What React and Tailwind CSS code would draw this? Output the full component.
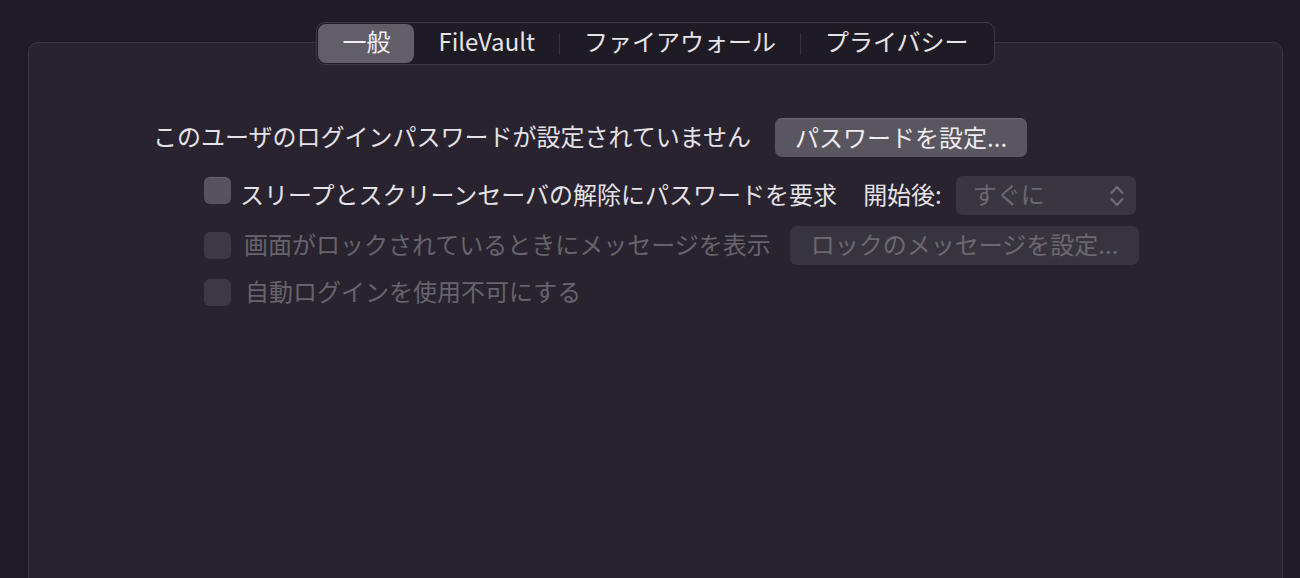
import React from "react"

const font = { fontFamily: '"Noto Sans CJK JP", "Noto Sans", sans-serif' }

const tabs = ["一般", "FileVault", "ファイアウォール", "プライバシー"]

function Checkbox({ disabled }) {
  return (
    <div
      className={
        "w-[27px] h-[27px] rounded-[6px] shrink-0 " +
        (disabled ? "bg-[#3d3943]" : "bg-[#57535d] border-t border-[#66626b]")
      }
    />
  )
}

function Chevrons() {
  return (
    <svg width="16" height="26" viewBox="0 0 16 26" fill="none">
      <path d="M2.5 10 L8 4 L13.5 10" stroke="#6f6b74" strokeWidth="2.2" strokeLinecap="round" strokeLinejoin="round" />
      <path d="M2.5 16 L8 22 L13.5 16" stroke="#6f6b74" strokeWidth="2.2" strokeLinecap="round" strokeLinejoin="round" />
    </svg>
  )
}

export default function App() {
  return (
    <div className="w-[1300px] h-[578px] overflow-hidden bg-[#201c26] pt-[42px] pl-[28px] pr-[17px] text-[#e4e2e7]" style={font}>
      <div className="relative h-[600px] rounded-[10px] border border-[#3b3741] bg-[#28232e]">
        {/* segmented tabs */}
        <div className="absolute left-0 right-0 -top-[21px] flex justify-center">
          <div className="flex items-center h-[43px] px-[1px] rounded-[9px] border border-[#3d3944] bg-[#1f1b24]">
            {tabs.map((t, i) => (
              <React.Fragment key={t}>
                {i > 1 && <div className="w-px h-[22px] bg-[#36323c]" />}
                <div
                  className={
                    "h-[39px] flex items-center pb-[5px] px-[24px] text-[24px] leading-none rounded-[8px] " +
                    (i === 0 ? "bg-[#625e67] text-[#f0eef2]" : "text-[#e6e4e9]")
                  }
                >
                  {t}
                </div>
              </React.Fragment>
            ))}
          </div>
        </div>

        <div className="pt-[75px] pl-[124px]">
          <div className="flex items-center h-[39px] gap-[24px]">
            <span className="text-[24px] leading-none pb-[4px]">このユーザのログインパスワードが設定されていません</span>
            <div className="h-[39px] px-[20px] pb-[3px] flex items-center rounded-[7px] bg-[#5a5660] text-[24px] leading-none text-[#eeecf0] border-t border-[#6a666f]">
              パスワードを設定...
            </div>
          </div>

          <div className="flex items-center h-[39px] mt-[19px] pl-[51px]">
            <div className="-mt-[10px]"><Checkbox /></div>
            <span className="ml-[9px] text-[24px] leading-none pb-[4px]">スリープとスクリーンセーバの解除にパスワードを要求</span>
            <span className="ml-[26px] text-[24px] leading-none pb-[4px]">開始後:</span>
            <div className="ml-[14px] w-[180px] h-[39px] rounded-[7px] bg-[#3a3640] flex items-center justify-between pl-[17px] pr-[11px]">
              <span className="text-[24px] leading-none pb-[4px] text-[#6c6871]">すぐに</span>
              <Chevrons />
            </div>
          </div>

          <div className="flex items-center h-[39px] mt-[11px] pl-[51px]">
            <Checkbox disabled />
            <span className="ml-[13px] text-[24px] leading-none pb-[4px] text-[#67636c]">画面がロックされているときにメッセージを表示</span>
            <div className="ml-[19px] h-[39px] px-[21px] pb-[3px] flex items-center rounded-[7px] bg-[#38343e] text-[24px] leading-none text-[#6c6871]">
              ロックのメッセージを設定...
            </div>
          </div>

          <div className="flex items-center h-[39px] mt-[8px] pl-[51px]">
            <Checkbox disabled />
            <span className="ml-[14px] text-[24px] leading-none pb-[4px] text-[#67636c]">自動ログインを使用不可にする</span>
          </div>
        </div>
      </div>
    </div>
  )
}
